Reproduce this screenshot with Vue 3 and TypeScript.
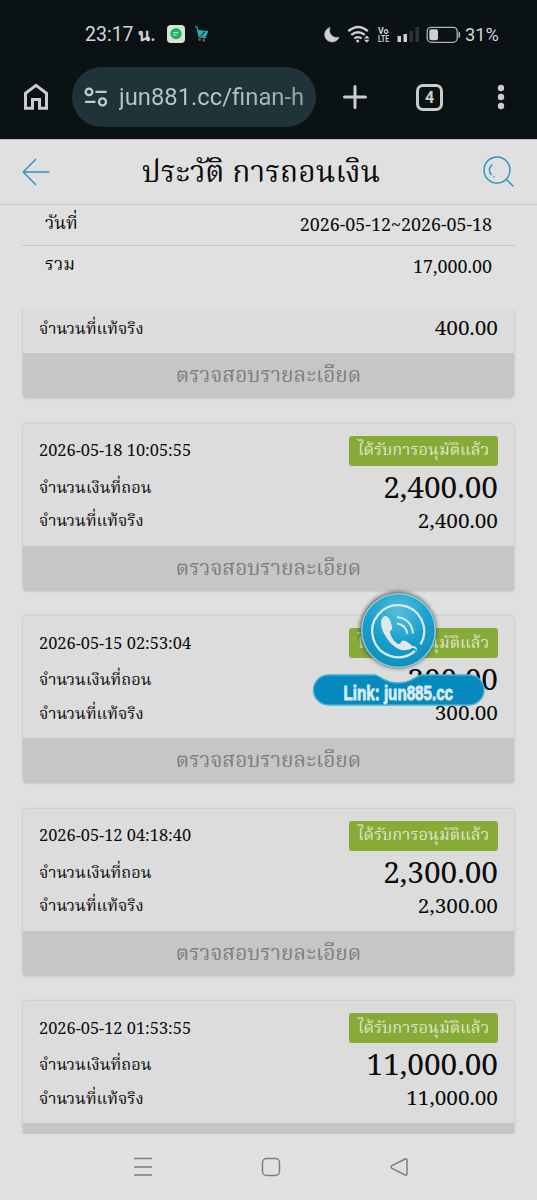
<script setup lang="ts">
interface Withdrawal {
  date?: string
  amount?: string
  net: string
}

const items: Withdrawal[] = [
  { net: '400.00' },
  { date: '2026-05-18 10:05:55', amount: '2,400.00', net: '2,400.00' },
  { date: '2026-05-15 02:53:04', amount: '300.00', net: '300.00' },
  { date: '2026-05-12 04:18:40', amount: '2,300.00', net: '2,300.00' },
  { date: '2026-05-12 01:53:55', amount: '11,000.00', net: '11,000.00' },
]
</script>

<template>
  <div class="screen">
    <div class="chrome">
      <div class="status">
        <span class="clock">23:17 <b>น.</b></span>
        <svg class="line-app" width="18" height="18" viewBox="0 0 18 18">
          <rect width="18" height="18" rx="4" fill="#dededb" />
          <path d="M9 3.200c-3.200 0-5.700 2.400-5.700 5.400s2.500 5.600 5.700 5.600c3.200 0 5.600-2.500 5.600-5.600S12.200 3.200 9 3.200z" fill="#20b456" />
          <path d="M6 7.700h5.500M6 10h3.800" stroke="#d5eadb" stroke-width="1" />
        </svg>
        <svg class="cart" width="16" height="18" viewBox="0 0 16 18">
          <path d="M1 1.500l1.900.6L5.200 12l6.800.8" fill="none" stroke="#27b4b7" stroke-width="1.200" />
          <path d="M3.800 5l10.600 1-2.700 6.100-6.300-.8z" fill="#27b4b7" />
          <path d="M10 6.500L8.500 10.300M8.600 8.500L6.800 10.500M10 7l1.200 1" stroke="#103238" stroke-width="1" fill="none" />
          <circle cx="5.600" cy="14.600" r="1.300" fill="#a4475b" />
          <circle cx="9.800" cy="15.300" r="1.400" fill="#a4475b" />
        </svg>
        <span class="grow"></span>
        <svg width="150" height="24" viewBox="322 22 150 24" class="sys">
          <path d="M331 27.500A7.400 7.400 0 1 0 340 37.300A7.300 7.300 0 0 1 331 27.500z" fill="#cdd0d1" stroke="#cdd0d1" stroke-width=".6" />
          <g fill="none" stroke="#cdd0d1" stroke-width="2.300">
            <path d="M349.300 31.200q10-8.400 19.500 0M352.300 34.900q6.700-5.400 13.500 0M355.300 38.400q3.700-2.600 7.300 0" />
          </g>
          <circle cx="358.700" cy="41" r="1.500" fill="#cdd0d1" />
          <path d="M367.800 35.500l2.800 3h-5.600zM367.800 42.700l2.800-3h-5.600z" fill="#cdd0d1" />
          <text x="379" y="34" class="volte" textLength="10.500" lengthAdjust="spacingAndGlyphs">Vo</text>
          <text x="379" y="42.200" class="volte" textLength="11" lengthAdjust="spacingAndGlyphs">LTE</text>
          <path d="M398.500 36h3.500v6h-3.500zM404.500 34h3.500v8h-3.500z" fill="#cdd0d1" />
          <path d="M410.500 31h3.500v11h-3.500zM416.500 27h3.500v15h-3.500z" fill="#2b3335" />
          <rect x="428.200" y="27.300" width="30" height="15" rx="4" fill="none" stroke="#aeb3b4" stroke-width="1.300" />
          <rect x="430.300" y="29.300" width="8.700" height="11" rx="2" fill="#cdd0d1" />
          <path d="M459.500 31.500q1.700 0 1.700 3.300t-1.700 3.300z" fill="#aeb3b4" />
        </svg>
        <span class="pct">31%</span>
      </div>
      <div class="toolbar">
        <svg class="home" width="26" height="28" viewBox="0 0 26 28">
          <path d="M2.500 25.300V10.200L13 2.300l10.500 7.900v15.100h-7v-8.800H9.500v8.800z" fill="none" stroke="#c9cdcf" stroke-width="3" />
        </svg>
        <div class="url">
          <svg width="24" height="20" viewBox="0 0 24 20" fill="none" stroke="#c3cdd0" stroke-width="2.300">
            <circle cx="5" cy="4.900" r="3.300" />
            <path d="M11.500 4.900H22.500M1 14.900H11.500" />
            <circle cx="18.500" cy="14.900" r="3.500" />
          </svg>
          <span class="address">jun881.cc/finan-h</span>
        </div>
        <svg class="plus" width="24" height="24" viewBox="0 0 24 24">
          <path d="M12 1.500v21M1.500 12h21" stroke="#c9cdcf" stroke-width="3" stroke-linecap="round" />
        </svg>
        <div class="tabs">4</div>
        <svg class="more" width="8" height="26" viewBox="0 0 8 26" fill="#c9cdcf">
          <circle cx="4" cy="4" r="3.200" /><circle cx="4" cy="13" r="3.200" /><circle cx="4" cy="22" r="3.200" />
        </svg>
      </div>
    </div>

    <header class="header">
      <svg width="28" height="28" viewBox="0 0 28 28" fill="none" stroke="#2795c5" stroke-width="1.400">
        <path d="M14 1L1.200 14 14 27M1.200 14H27.500" />
      </svg>
      <h1>ประวัติ การถอนเงิน</h1>
      <svg width="32" height="32" viewBox="0 0 32 32" fill="none" stroke="#2795c5" stroke-width="1.400">
        <circle cx="14" cy="14" r="13" />
        <path d="M23.300 23.300L30.500 30.500M9.500 8.500C5.500 11.500 5.500 15.800 8.500 19M10.500 20.300l1 .6" />
      </svg>
    </header>

    <section class="summary">
      <div class="sum-row"><span class="th">วันที่</span><span>2026-05-12~2026-05-18</span></div>
      <div class="sum-row"><span class="th">รวม</span><span>17,000.00</span></div>
    </section>

    <main class="list">
      <article v-for="(item, i) in items" :key="i" class="card" :class="{ partial: !item.date }">
        <div class="body">
          <div v-if="item.date" class="top">
            <span class="date">{{ item.date }}</span>
            <span class="badge">ได้รับการอนุมัติแล้ว</span>
          </div>
          <div v-if="item.amount" class="row amount">
            <span class="label">จำนวนเงินที่ถอน</span><span class="big">{{ item.amount }}</span>
          </div>
          <div class="row">
            <span class="label">จำนวนที่แท้จริง</span><span class="net">{{ item.net }}</span>
          </div>
        </div>
        <div v-if="i < items.length - 1" class="detail">ตรวจสอบรายละเอียด</div>
        <div v-else class="detail"></div>
      </article>
    </main>

    <nav class="nav">
      <svg width="20" height="20" viewBox="0 0 20 20"><path d="M1 1.500h18M1 10h18M1 18h18" /></svg>
      <svg width="20" height="20" viewBox="0 0 20 20"><rect x="1.500" y="1.500" width="17" height="17" rx="4" /></svg>
      <svg width="20" height="20" viewBox="0 0 20 20"><path d="M16.200 2L3 8.700Q1 10 3 11.300L16.200 18Q18 18.600 18 16.500V3.500Q18 1.400 16.200 2z" /></svg>
    </nav>

    <svg class="contact" width="190" height="130" viewBox="304 585 190 130">
      <defs>
        <radialGradient id="ball" cx="50%" cy="25%" r="75%">
          <stop offset="0" stop-color="#55bfdd" />
          <stop offset="0.550" stop-color="#189fcd" />
          <stop offset="1" stop-color="#0f8fbd" />
        </radialGradient>
        <filter id="shade" x="-20%" y="-20%" width="140%" height="140%"><feGaussianBlur stdDeviation="2" /></filter>
      </defs>
      <circle cx="398" cy="630" r="38" fill="#333" opacity="0.850" filter="url(#shade)" />
      <circle cx="398.500" cy="630.500" r="36.800" fill="url(#ball)" stroke="#8ac9dc" stroke-width="1.500" />
      <path d="M415 651A26 26 0 1 1 420.500 644.500" fill="none" stroke="#dce7eb" stroke-width="2.300" />
      <path d="M385 616c-5 2-5 9-1.500 16.500 4.500 9 11 15.500 18 17.500 4 .8 8.500-.3 10.500-2 2-.5 4.500.5 4 3.500 2-2.500.5-6-4-5.500-2-2.500-6.500-5.500-8.500-5.500-2.500 0-3 4-5 3.500-4-1.500-8-8-8.500-11.500-.3-2 2.500-2.500 2.300-4.500-.5-3-2.800-13-7.300-12z" fill="#e2e7e9" />
      <path d="M397 617c9 1 15 7 16 16.500M397 623.500c6 .7 9.500 4.500 10.500 10.500" fill="none" stroke="#dce7eb" stroke-width="2" />
      <path d="M328.500 675H375C381 676 384 683 398 683C412 683 415 676 422 675H469a15 15 0 0 1 0 30H328.500a15 15 0 0 1 0-30z" fill="#0689bd" stroke="#42b1d3" stroke-width="1.400" />
      <text x="343.500" y="700" class="link" textLength="109.500" lengthAdjust="spacingAndGlyphs">Link: jun885.cc</text>
    </svg>
  </div>
</template>

<style>
body { background: #e0e0e0; }
</style>

<style scoped>
.screen {
  position: relative;
  width: 537px;
  height: 1200px;
  overflow: hidden;
  background: #e0e0e0;
  color: #0b0b0b;
  font-family: "Noto Serif", "Noto Serif Thai", "Liberation Serif", serif;
  font-size: 17.900px;
  display: flex;
  flex-direction: column;
}
.screen * { box-sizing: border-box; }
.chrome { height: 140px; flex: none; background: #0a1214; border-bottom: 1px solid #b5bbbd; font-family: Roboto, "Noto Sans", sans-serif; }
.status { height: 67px; padding: 10px 38px 9px 85px; display: flex; align-items: center; color: #d3d6d7; }
.clock { font-size: 19.500px; width: 70px; padding-top: 1px; white-space: nowrap; }
.clock b { font-size: 17.500px; }
.line-app { margin-left: 12px; }
.cart { margin-left: 9px; }
.grow { flex: 1; }
.sys { flex: none; margin-right: -6px; }
.volte { font: 700 9.500px Roboto, sans-serif; fill: #cdd0d1; }
.pct { font-size: 18.200px; width: 34px; white-space: nowrap; }
.toolbar { height: 60px; display: flex; align-items: center; padding-left: 23px; }
.url { margin-left: 23px; width: 244px; height: 60px; border-radius: 30px; background: #203338; display: flex; align-items: center; padding-left: 12px; }
.address { margin-left: 11px; font-size: 23.800px; color: #b9c5c8; white-space: nowrap; background: linear-gradient(90deg, #b9c5c8 60%, #93a2a6); background-clip: text; -webkit-text-fill-color: transparent; }
.plus { margin-left: 27px; }
.tabs { margin-left: 49px; width: 27px; height: 27px; border: 3px solid #c9cdcf; border-radius: 7px; color: #c9cdcf; font-weight: 700; font-size: 16px; display: flex; align-items: center; justify-content: center; }
.more { margin-left: 54px; }
.header { height: 65px; flex: none; border-bottom: 1px solid #c7c7c7; display: flex; align-items: center; justify-content: space-between; padding: 0 22px; }
h1 { font-size: 29.900px; line-height: 40px; font-weight: 400; margin: -2px 0 0 -11px; white-space: nowrap; }
.summary { height: 105px; flex: none; padding: 0 22px; }
.sum-row { height: 39px; padding: 0 23px 0 23px; display: flex; justify-content: space-between; align-items: center; }
.sum-row:first-child { border-bottom: 1px solid #c8c8c8; height: 41px; padding-bottom: 2px; }
.th { font-size: 17.900px; }
.list { height: 824px; flex: none; overflow: hidden; padding: 0 22px; display: flex; flex-direction: column; gap: 23.500px; }
.card { height: 169px; flex: none; border: 1px solid #d0d0d0; border-radius: 5px; background: #dcdcdc; box-shadow: 0 0 2px rgba(0, 0, 0, .08); overflow: hidden; display: flex; flex-direction: column; }
.partial { height: 89.300px; border-top: 0; border-radius: 0 0 5px 5px; }
.body { flex: 1; padding: 12px 16px 0 16px; }
.partial .body { padding-top: 4px; }
.top { display: flex; justify-content: space-between; align-items: center; height: 30px; }
.row { display: flex; justify-content: space-between; align-items: center; height: 26px; }
.amount { height: 41px; }
.label { font-size: 16.400px; margin-top: 4px; }
.big { font-size: 29.800px; }
.net { font-size: 20.800px; }
.date { font-size: 16.400px; margin-top: -2px; }
.badge { width: 149px; height: 30px; border-radius: 3px; background: #86ab37; color: #dfe6cd; font-size: 16.400px; display: flex; align-items: center; justify-content: center; white-space: nowrap; }
.detail { height: 45px; flex: none; background: #c6c6c6; color: #7f7f7f; font-size: 20.900px; padding-top: 2px; display: flex; align-items: center; justify-content: center; white-space: nowrap; }
.nav { flex: 1; display: flex; align-items: center; justify-content: center; gap: 108px; padding-left: 4px; }
.nav svg { fill: none; stroke: #7d7d7d; stroke-width: 1.500; }
.contact { position: absolute; left: 304px; top: 585px; }
.link { font: 700 20px "Liberation Sans Narrow", "Liberation Sans", sans-serif; fill: #d9eaf0; stroke: #d9eaf0; stroke-width: .9; }
</style>
